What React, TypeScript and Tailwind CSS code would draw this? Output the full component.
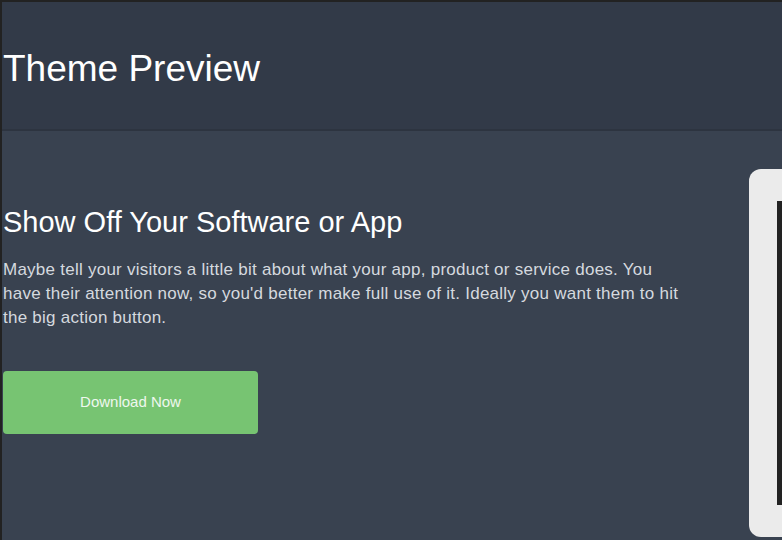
import React from 'react';

const App: React.FC = () => {
    return (
        <div
            className="w-[782px] h-[540px] overflow-hidden bg-[#222] pt-[2px] pl-[2px]"
            style={{ fontFamily: '"Liberation Sans", Arial, sans-serif' }}
        >
            <header className="h-[129px] bg-[#323a48] border-b-[2px] border-[#2d3440] flex items-center pl-px">
                <h1 className="text-[37px] leading-none text-white mt-[6px]">Theme Preview</h1>
            </header>

            <main className="h-full bg-[#394250] flex pl-px">
                <section className="w-[700px] pt-[74px]">
                    <h2 className="text-[29px] leading-[34px] text-white">Show Off Your Software or App</h2>
                    <p className="mt-[19px] text-[17px] leading-[24px] tracking-[0.25px] text-[#d5d9df] whitespace-nowrap">
                        Maybe tell your visitors a little bit about what your app, product or service does. You
                        <br />
                        have their attention now, so you'd better make full use of it. Ideally you want them to hit
                        <br />
                        the big action button.
                    </p>
                    <button className="mt-[41px] w-[255px] h-[63px] rounded bg-[#77c472] text-[15px] text-[#eef7ee]">
                        Download Now
                    </button>
                </section>

                <div className="ml-auto mt-[38px] w-[33px] h-[368px] bg-[#ebebeb] rounded-l-[12px] pl-[28px] pt-[32px]">
                    <div className="h-[304px] bg-[#222]" />
                </div>
            </main>
        </div>
    );
};

export default App;
